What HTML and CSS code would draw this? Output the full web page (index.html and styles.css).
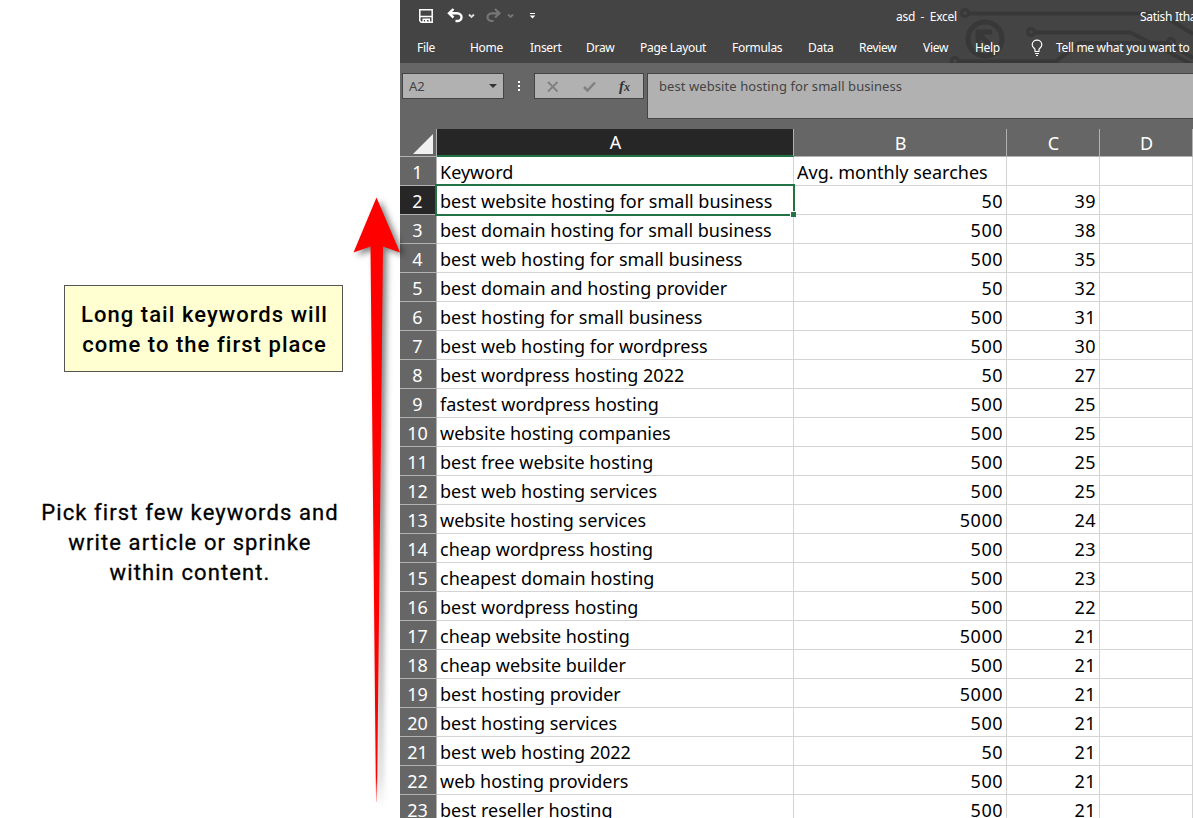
FILE: index.html
```html
<!DOCTYPE html>
<html lang="en">
<head>
<meta charset="utf-8">
<title>Long tail keywords</title>
<link rel="stylesheet" href="styles.css">
</head>
<body>
<div class="page">
  <div class="notes">
    <p class="note note-box">Long tail keywords will<br>come to the first place</p>
    <p class="note note-plain">Pick first few keywords and<br>write article or sprinke<br>within content.</p>
  </div>

  <div class="excel">
    <div class="ribbon">
      <svg class="circuit" width="280" height="63" viewBox="913 0 280 63" fill="none" stroke="#383838" stroke-width="4">
        <circle cx="965" cy="13" r="3.5" stroke-width="3"/>
        <path d="M969 13.500H1160L1193 34"/>
        <circle cx="985" cy="39" r="17" stroke-width="5"/>
        <path d="M993 48L978 33M978 47V32H992" stroke-width="5"/>
        <circle cx="1031" cy="32" r="3.500" stroke-width="3"/>
        <path d="M1035 32.500H1130L1155 45L1193 65"/>
        <circle cx="955" cy="61" r="3.500" stroke-width="3"/>
        <path d="M959 61.500H1056L1079 43H1168L1193 58"/>
        <circle cx="1171" cy="42" r="3.500" stroke-width="3"/>
      </svg>
      <div class="titlebar">
        <svg class="quick" width="150" height="32" viewBox="400 0 150 32" fill="none">
          <path d="M419.800 9.800H432.200V22.200H421.200L419.800 20.800ZM420 16.500H432M423.200 22V19.200H429.300V22" stroke="#fff" stroke-width="1.500"/>
          <path d="M425 20H427V22H425Z" fill="#fff"/>
          <path d="M453.500 9L449 13.300L453.500 17.500M449.500 13.300H457C463 13.300 463 21 457 21H455.500" stroke="#fff" stroke-width="2.400"/>
          <path d="M469 14.500L471.500 17L474 14.500" stroke="#ddd" stroke-width="1.800"/>
          <path d="M495 9L499.500 13.300L495 17.500M499 13.300H492C486 13.300 486 21 492 21H493.500" stroke="#767676" stroke-width="2.200"/>
          <path d="M508 14.500L510.500 17L513 14.500" stroke="#767676" stroke-width="1.800"/>
          <path d="M530 13.500H535" stroke="#fff"/>
          <path d="M529.700 15.500H535.300L532.500 18.500Z" fill="#fff"/>
        </svg>
        <span class="book">asd&nbsp; -&nbsp; Excel</span>
        <span class="user">Satish Itha</span>
      </div>
      <div class="tabs">
        <span>File</span>
        <span>Home</span>
        <span>Insert</span>
        <span>Draw</span>
        <span>Page Layout</span>
        <span>Formulas</span>
        <span>Data</span>
        <span>Review</span>
        <span>View</span>
        <span>Help</span>
        <svg width="13" height="18" viewBox="0 0 13 18" fill="none" stroke="#fff" stroke-width="1.200">
          <path d="M4 11.500V10.500C4 9.500 1.200 8.500 1.200 5.800C1.200 3 3.400 1.200 6 1.200S10.800 3 10.800 5.800C10.800 8.500 8 9.500 8 10.500V12.500H4ZM4 14.500H8M5 16.500H7"/>
        </svg>
        <span class="tell">Tell me what you want to</span>
      </div>
    </div>

    <div class="formula-bar">
      <div class="name-box">A2<i class="caret"></i></div>
      <div class="dots"><i></i><i></i><i></i></div>
      <div class="buttons">
        <svg width="108" height="24" viewBox="0 0 108 24" fill="none">
          <path d="M13 8L22.500 17.500M22.500 8L13 17.500" stroke="#808080" stroke-width="1.800"/>
          <path d="M49 13L52.500 16.500L60 8.500" stroke="#808080" stroke-width="2.500"/>
        </svg>
        <span class="fx">f<small>x</small></span>
      </div>
      <div class="formula">best website hosting for small business</div>
    </div>

    <div class="sheet">
      <table class="grid">
        <colgroup><col class="c-num"><col class="c-a"><col class="c-b"><col class="c-c"><col class="c-c"></colgroup>
        <tr class="letters"><th class="corner"><i></i></th><th class="active">A</th><th>B</th><th>C</th><th>D</th></tr>
        <tr><th>1</th><td>Keyword</td><td class="avg">Avg. monthly searches</td><td></td><td></td></tr>
        <tr><th class="active">2</th><td class="selected">best website hosting for small business</td><td>50</td><td>39</td><td></td></tr>
        <tr><th>3</th><td>best domain hosting for small business</td><td>500</td><td>38</td><td></td></tr>
        <tr><th>4</th><td>best web hosting for small business</td><td>500</td><td>35</td><td></td></tr>
        <tr><th>5</th><td>best domain and hosting provider</td><td>50</td><td>32</td><td></td></tr>
        <tr><th>6</th><td>best hosting for small business</td><td>500</td><td>31</td><td></td></tr>
        <tr><th>7</th><td>best web hosting for wordpress</td><td>500</td><td>30</td><td></td></tr>
        <tr><th>8</th><td>best wordpress hosting 2022</td><td>50</td><td>27</td><td></td></tr>
        <tr><th>9</th><td>fastest wordpress hosting</td><td>500</td><td>25</td><td></td></tr>
        <tr><th>10</th><td>website hosting companies</td><td>500</td><td>25</td><td></td></tr>
        <tr><th>11</th><td>best free website hosting</td><td>500</td><td>25</td><td></td></tr>
        <tr><th>12</th><td>best web hosting services</td><td>500</td><td>25</td><td></td></tr>
        <tr><th>13</th><td>website hosting services</td><td>5000</td><td>24</td><td></td></tr>
        <tr><th>14</th><td>cheap wordpress hosting</td><td>500</td><td>23</td><td></td></tr>
        <tr><th>15</th><td>cheapest domain hosting</td><td>500</td><td>23</td><td></td></tr>
        <tr><th>16</th><td>best wordpress hosting</td><td>500</td><td>22</td><td></td></tr>
        <tr><th>17</th><td>cheap website hosting</td><td>5000</td><td>21</td><td></td></tr>
        <tr><th>18</th><td>cheap website builder</td><td>500</td><td>21</td><td></td></tr>
        <tr><th>19</th><td>best hosting provider</td><td>5000</td><td>21</td><td></td></tr>
        <tr><th>20</th><td>best hosting services</td><td>500</td><td>21</td><td></td></tr>
        <tr><th>21</th><td>best web hosting 2022</td><td>50</td><td>21</td><td></td></tr>
        <tr><th>22</th><td>web hosting providers</td><td>500</td><td>21</td><td></td></tr>
        <tr><th>23</th><td>best reseller hosting</td><td>500</td><td>21</td><td></td></tr>
      </table>
    </div>
  </div>

  <svg class="arrow" width="80" height="640" viewBox="340 178 80 640">
    <defs>
      <linearGradient id="fade" x1="0" y1="0" x2="0" y2="1">
        <stop offset="0.960" stop-color="#f00"/>
        <stop offset="1" stop-color="#f00" stop-opacity="0.200"/>
      </linearGradient>
    </defs>
    <path d="M376.500 197.500L400 252.500L383 246.500L377 802H376L370.500 246.500L353.500 252.500Z" fill="url(#fade)"/>
  </svg>
</div>
</body>
</html>
```
FILE: styles.css
```css
body {
	margin: 0;
	background: #fff;
	font-family: "Noto Sans", "Open Sans", sans-serif;
}
.page {
	position: relative;
	display: flex;
	width: 1193px;
	height: 818px;
	overflow: hidden;
}
.notes {
	width: 400px;
	flex: none;
}
.note {
	margin: 0;
	font-family: Roboto, sans-serif;
	font-size: 22px;
	font-weight: 500;
	line-height: 30px;
	text-align: center;
	white-space: nowrap;
	color: #000;
}
.note-box {
	box-sizing: border-box;
	width: 279px;
	height: 87px;
	margin: 285px 0 0 64px;
	padding: 14px 0 0 2px;
	border: 1px solid #555;
	background: #ffffd2;
	letter-spacing: 1.050px;
}
.note-plain {
	width: 300px;
	margin: 126px 0 0 40px;
	font-weight: 400;
	letter-spacing: 1.100px;
	-webkit-text-stroke: 0.300px #000;
}
.excel {
	display: flex;
	flex-direction: column;
	width: 793px;
	flex: none;
	background: #666;
}
.ribbon {
	position: relative;
	height: 63px;
	background: #444;
	color: #fff;
	font-size: 12px;
}
.circuit {
	position: absolute;
	right: 0;
	top: 0;
}
.titlebar {
	position: relative;
	display: grid;
	grid-template-columns: 496px 244px 53px;
	height: 32px;
	line-height: 33px;
	white-space: nowrap;
	overflow: hidden;
	letter-spacing: -0.3px;
}
.tabs {
	position: relative;
	display: grid;
	grid-template-columns: 53px 60px 56px 54px 92px 76px 51px 64px 52px 56px 25px 137px;
	padding-left: 17px;
	height: 31px;
	line-height: 32px;
	white-space: nowrap;
	letter-spacing: -0.3px;
}
.tabs svg {
	margin-top: 7px;
}
.formula-bar {
	display: flex;
	height: 56px;
	padding: 10px 0 0 2px;
	box-sizing: border-box;
	color: #444;
	font-size: 13px;
}
.name-box,
.buttons,
.formula {
	box-sizing: border-box;
	border: 1px solid #444;
	background: #b1b1b1;
}
.name-box {
	display: flex;
	justify-content: space-between;
	width: 102px;
	height: 26px;
	padding: 0 6px;
	line-height: 25px;
}
.caret {
	width: 0;
	height: 0;
	margin-top: 10px;
	border: 4px solid transparent;
	border-top-color: #333;
	border-bottom: 0;
}
.dots {
	display: flex;
	flex-direction: column;
	gap: 2px;
	width: 2px;
	margin: 8px 15px 0 14px;
}
.dots i {
	width: 2px;
	height: 2px;
	background: #fff;
}
.buttons {
	display: flex;
	width: 110px;
	height: 26px;
	margin-left: -1px;
}
.fx {
	margin-left: -24px;
	font: italic bold 15px/24px "Liberation Serif", serif;
	color: #333;
}
.fx small {
	font-size: 12px;
}
.formula {
	flex: 1;
	height: 46px;
	margin-left: 3px;
	padding-left: 11px;
	border-right: 0;
	line-height: 25px;
	letter-spacing: 0.080px;
}
.sheet {
	flex: 1;
	min-height: 0;
	padding-top: 10px;
	overflow: hidden;
}
.grid {
	width: 793px;
	table-layout: fixed;
	border-collapse: separate;
	border-spacing: 0;
	background: #fff;
	color: #000;
	font-size: 18px;
}
.c-num { width: 37px; }
.c-a { width: 357px; }
.c-b { width: 213px; }
.c-c { width: 93px; }
.grid th,
.grid td {
	box-sizing: border-box;
	height: 29px;
	padding: 2px 3px 0 3px;
	border-right: 1px solid #d4d4d4;
	border-bottom: 1px solid #d4d4d4;
	line-height: 26px;
	text-align: right;
	white-space: nowrap;
	letter-spacing: 0.500px;
}
.grid th {
	padding: 2px 1px 0 0;
	background: #666;
	border-color: #b1b1b1;
	color: #fff;
	font-weight: 400;
	text-align: center;
	letter-spacing: 0;
}
.grid .letters th {
	height: 28px;
	padding: 0 0 0 1px;
	line-height: 26px;
}
.grid td:nth-child(2),
.grid .avg {
	text-align: left;
	letter-spacing: 0;
}
.grid th.active {
	background: #262626;
}
.grid .letters .active {
	border-bottom: 2px solid #217346;
}
.grid .corner i {
	display: block;
	width: 20px;
	height: 20px;
	margin: 3px 0 0 12px;
	background: #f0f0f0;
	clip-path: polygon(100% 0, 100% 100%, 0 100%);
}
.grid .selected {
	position: relative;
}
/* selection frame and its fill handle */
.selected::before {
	content: "";
	position: absolute;
	inset: -2px -2px -2px -2px;
	border: 2px solid #217346;
}
.selected::after {
	content: "";
	position: absolute;
	right: -3px;
	bottom: -3px;
	width: 5px;
	height: 5px;
	border: 1px solid #fff;
	border-right: 0;
	border-bottom: 0;
	background: #217346;
}
.arrow {
	position: absolute;
	left: 340px;
	top: 178px;
	filter: drop-shadow(4px 3px 3px rgba(0, 0, 0, 0.5));
}
```
